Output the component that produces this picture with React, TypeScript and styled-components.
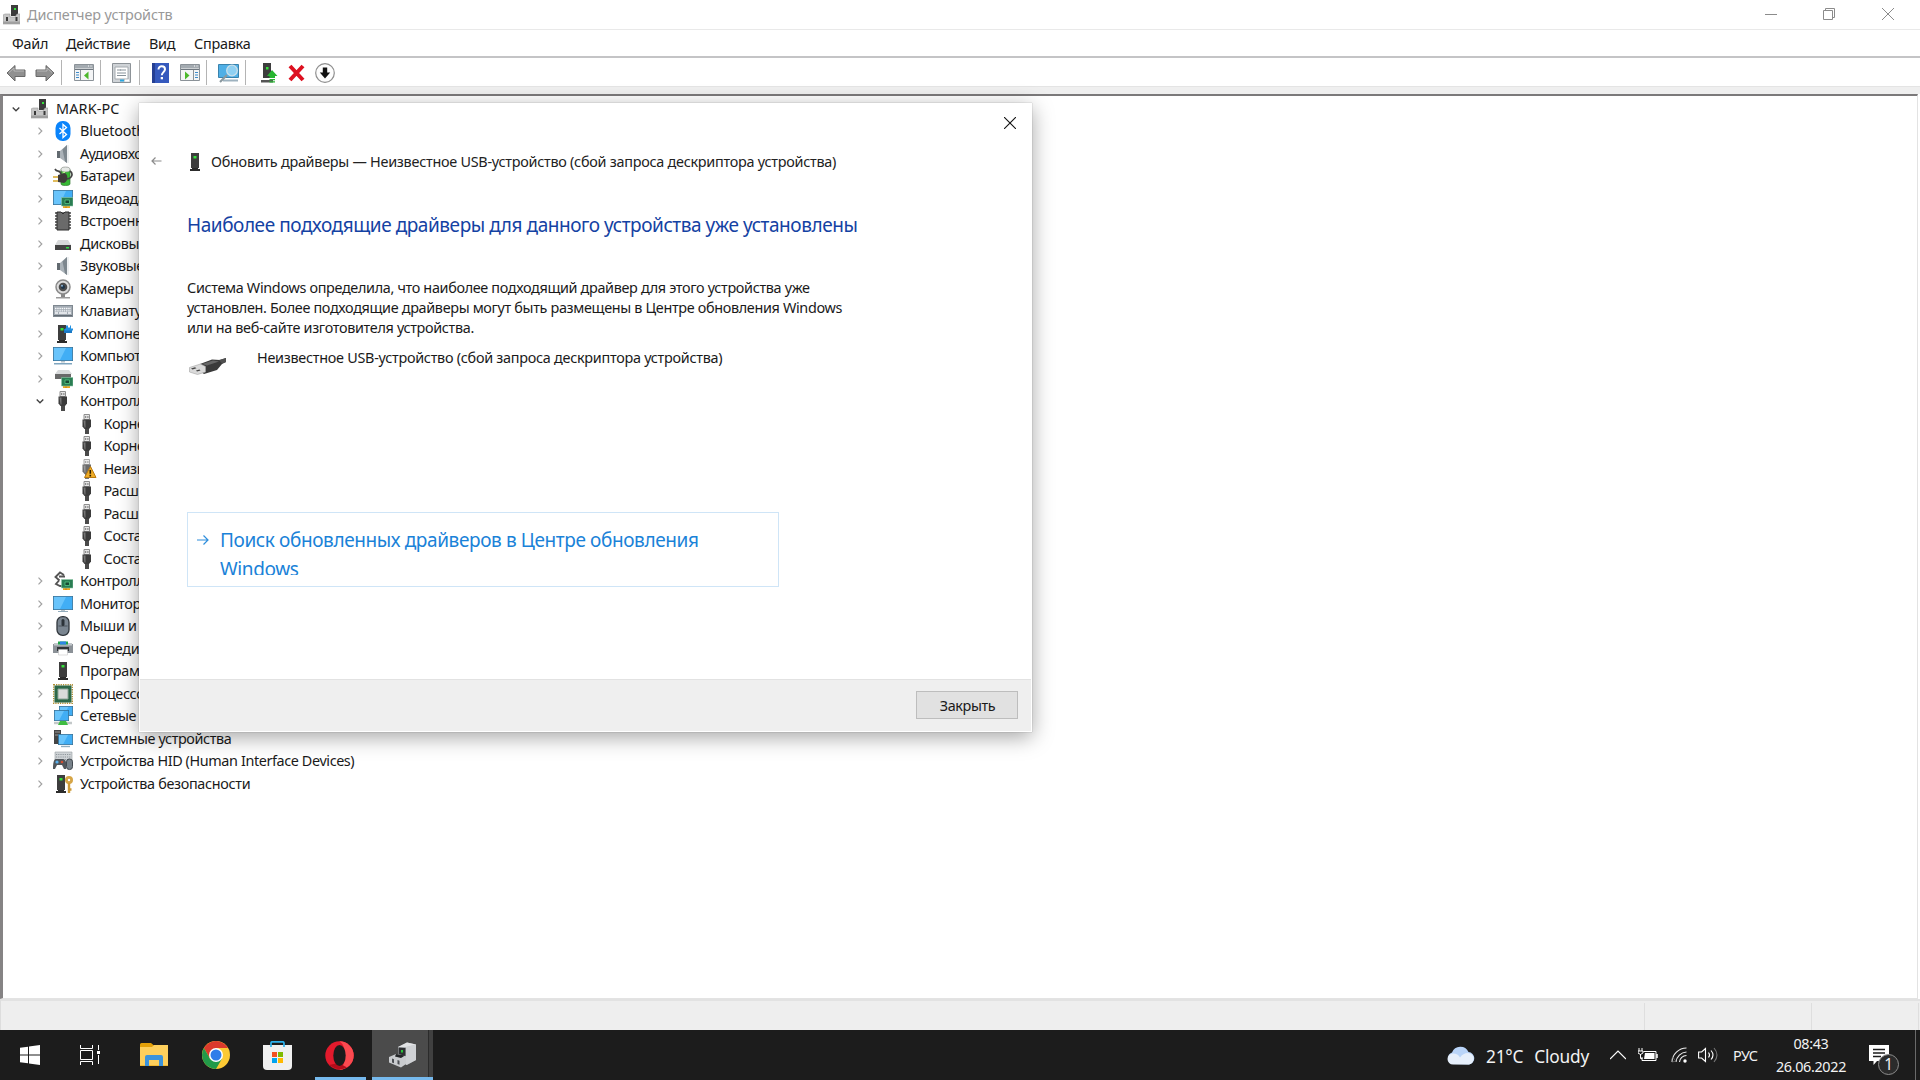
import React from "react";
import styled, { createGlobalStyle } from "styled-components";

const Global = createGlobalStyle`
  * { box-sizing: border-box; }
  body { margin: 0; background: #fff; overflow: hidden; }
  svg { display: block; flex: none; }
`;

const Desktop = styled.div`
  position: relative;
  width: 1920px;
  height: 1080px;
  display: flex;
  flex-direction: column;
  background: #fff;
  color: #1a1a1a;
  font-family: "Noto Sans", "Open Sans", sans-serif;
  font-size: 14.4px;
  letter-spacing: -0.2px;
  white-space: nowrap;
  overflow: hidden;
`;

/* ---------- window chrome ---------- */
const TitleBar = styled.header`
  height: 30px;
  flex: none;
  display: flex;
  align-items: center;
  padding: 0 3px 0 3px;
  border-bottom: 1px solid #e9e9e9;
  color: #999;
`;
const WindowTitle = styled.span`
  margin-left: 7px;
  flex: 1;
  line-height: 20px;
  letter-spacing: -0.1px;
`;
const Caption = styled.button`
  width: 58.5px;
  height: 29px;
  padding: 0 0 2px;
  border: 0;
  background: none;
  display: flex;
  align-items: center;
  justify-content: center;
`;
const MenuBar = styled.nav`
  height: 28px;
  flex: none;
  display: flex;
  gap: 20px;
  padding: 4px 0 0 12px;
  line-height: 20px;
  letter-spacing: -0.25px;
  border-bottom: 2px solid #c4c4c6;
`;
const MenuItem = styled.span<{ $w: number }>`
  width: ${(p) => p.$w}px;
`;
const ToolBar = styled.div`
  height: 28px;
  flex: none;
  display: flex;
  align-items: center;
  padding: 1px 0 0 6px;
`;
const Tool = styled.span<{ $gap: number }>`
  margin-left: ${(p) => p.$gap}px;
`;
const Divider = styled.span<{ $gap: number }>`
  width: 1px;
  height: 25px;
  margin: 0 0 0 ${(p) => p.$gap}px;
  background: #b4b4b4;
`;
const Rebar = styled.div`
  height: 8px;
  flex: none;
  background: #efefef;
  border-top: 1px solid #e4e4e4;
`;

/* ---------- tree ---------- */
const TreePane = styled.main`
  height: 905px;
  flex: none;
  margin-right: 2px;
  border: 1px solid #e3e3e3;
  border-top: 2px solid #7b797a;
  border-left: 3px solid #858384;
  padding-top: 1.25px;
  letter-spacing: -0.3px;
`;
const Row = styled.div<{ $pad: number }>`
  height: 22.5px;
  display: flex;
  align-items: center;
  padding-left: ${(p) => p.$pad}px;
`;
const Twist = styled.span`
  width: 12px;
  display: flex;
  justify-content: center;
`;
const RowIcon = styled.span<{ $ml: number }>`
  margin-left: ${(p) => p.$ml}px;
  width: 20px;
`;
const Label = styled.span<{ $ml: number; $track?: number }>`
  margin-left: ${(p) => p.$ml}px;
  line-height: 20px;
  letter-spacing: ${(p) => p.$track ?? -0.32}px;
`;
const StatusBar = styled.footer`
  height: 31px;
  flex: none;
  display: flex;
  justify-content: flex-end;
  background: #eee;
  border-top: 2px solid #e2e2e2;
  border-left: 1px solid #ddd;
  padding-top: 2px;
`;
const StatusCell = styled.span<{ $w: number }>`
  width: ${(p) => p.$w}px;
  border-left: 1px solid #dedede;
`;

/* ---------- dialog ---------- */
const Dialog = styled.section`
  position: absolute;
  left: 139px;
  top: 103px;
  width: 893px;
  height: 629px;
  display: flex;
  flex-direction: column;
  background: #fff;
  border: 1px solid #fff;
  box-shadow: 0 0 1px rgba(0, 0, 0, 0.35), 0 5px 20px rgba(0, 0, 0, 0.36);
`;
const DialogTop = styled.div`
  height: 38px;
  display: flex;
  justify-content: flex-end;
  align-items: center;
  padding-right: 15px;
`;
const DialogHead = styled.div`
  height: 40px;
  display: flex;
  align-items: center;
  padding-left: 11px;
`;
const DialogName = styled.span`
  margin-left: 6px;
  line-height: 20px;
  letter-spacing: -0.26px;
  color: #222;
`;
const DialogBody = styled.div`
  flex: 1;
  padding-left: 47px;
  display: flex;
  flex-direction: column;
  align-items: flex-start;
`;
const Heading = styled.h1`
  margin: 27px 0 0;
  font-size: 19px;
  font-weight: 400;
  line-height: 32px;
  letter-spacing: -0.44px;
  color: #1442a3;
`;
const Paragraph = styled.p`
  margin: 37px 0 0;
  line-height: 20px;
  letter-spacing: -0.33px;
`;
const DeviceLine = styled.div`
  margin-top: 10px;
  height: 40px;
  display: flex;
  align-items: flex-start;
  gap: 31px;
  line-height: 20px;
  letter-spacing: -0.27px;
`;
const DeviceArt = styled.span`
  padding: 9px 0 0 1px;
`;
const CommandLink = styled.a`
  margin-top: 124px;
  width: 592px;
  height: 75px;
  border: 1px solid #cfe5f7;
  display: flex;
  padding: 13px 0 0 9px;
  color: #1a82d8;
  font-size: 19px;
  line-height: 28.5px;
  letter-spacing: -0.39px;
`;
const CommandText = styled.span`
  margin-left: 11px;
  width: 520px;
  height: 49px;
  overflow: hidden;
  white-space: normal;
`;
const ArrowBox = styled.span`
  padding-top: 9px;
`;
const DialogFooter = styled.div`
  height: 52px;
  display: flex;
  justify-content: flex-end;
  padding: 11px 13px 0 0;
  background: #efefef;
  border-top: 1px solid #e2e2e2;
`;
const CloseButton = styled.button`
  width: 102px;
  height: 28px;
  padding: 0 0 0 1px;
  border: 1px solid #bdbdbd;
  background: #e1e1e1;
  font: inherit;
  letter-spacing: -0.4px;
  color: #1a1a1a;
`;

/* ---------- taskbar ---------- */
const TaskBar = styled.div`
  height: 50px;
  flex: none;
  display: flex;
  background: #1c1c1c;
  color: #f2f2f2;
`;
const Task = styled.div<{ $w: number; $active?: boolean; $open?: boolean }>`
  width: ${(p) => p.$w}px;
  display: flex;
  align-items: center;
  justify-content: center;
  background: ${(p) => (p.$active ? "linear-gradient(90deg,#4b4b4b 56px,#2b2b2b 56px,#2b2b2b 57px,#404040 57px)" : "none")};
  ${(p) => p.$active && "padding-right: 1px;"}
  ${(p) => p.$open && "box-shadow: inset 0 -3px #76b9ed;"}
`;
const OpenTask = styled(Task)`
  margin: 0 6px 0 6px;
  padding-right: 2px;
`;
const Spacer = styled.div<{ $w?: number }>`
  flex: ${(p) => (p.$w ? `0 0 ${p.$w}px` : "1")};
`;
const Tray = styled.div`
  display: flex;
  align-items: center;
  width: 473px;
  flex: none;
`;
const Weather = styled.span`
  width: 124px;
  padding-top: 3px;
  margin-left: 11px;
  font-size: 17.3px;
  letter-spacing: -0.2px;
  line-height: 24px;
  display: flex;
  gap: 11px;
`;
const TrayItem = styled.span<{ $ml: number }>`
  margin-left: ${(p) => p.$ml}px;
`;
const Lang = styled.span`
  margin-left: 15px;
  width: 28px;
  padding-top: 1px;
  letter-spacing: -0.5px;
`;
const Clock = styled.div`
  width: 74px;
  margin-left: 13px;
  padding-bottom: 1px;
  text-align: center;
  line-height: 23px;
  letter-spacing: -0.35px;
`;
const Notify = styled.div`
  position: relative;
  margin-left: 21px;
  width: 46px;
  height: 50px;
  display: flex;
  align-items: center;
`;
const Badge = styled.span`
  position: absolute;
  left: 9px;
  top: 24px;
  width: 21px;
  height: 21px;
  border-radius: 50%;
  border: 1px solid #8d8d8d;
  background: #2b2b2b;
  text-align: center;
  line-height: 19px;
  font-size: 15.5px;
`;
const PeekLine = styled.span`
  width: 1px;
  height: 50px;
  background: #6a6a6a;
`;

/* ---------- drawings ---------- */
type Kids = { children: React.ReactNode; w?: number; h?: number };
const Ico = ({ children, w = 20, h = 20 }: Kids) => (
  <svg width={w} height={h} viewBox={`0 0 ${w} ${h}`} fill="none">{children}</svg>
);

const Card = () => (
  <g>
    <path d="M10 16h7v3h-7z" fill="#eda51c" />
    <path d="M13 16v3" stroke="#a86e0c" strokeWidth=".7" />
    <path d="M8.500 8.500H20V17H8.500z" fill="#2a7d53" stroke="#8fc9a8" strokeWidth=".6" />
    <path d="M12 11h4.500v3.500H12z" fill="#174a33" stroke="#5fd68e" strokeWidth=".7" />
  </g>
);
const Tower = ({ x = 5 }: { x?: number }) => (
  <g>
    <path d={`M${x + 1} 1h8v15h-8z`} fill="#3d3d3d" />
    <path d={`M${x + 2} 16h6v1h-6zM${x} 17h10v2h-10z`} fill="#2c2c2c" />
    <path d={`M${x + 3.5} 4h3v2.5h-3z`} fill="#35e33b" />
  </g>
);
const Screen = ({ x = 0, y = 1, w = 20, h = 14 }) => (
  <g>
    <rect x={x + 0.4} y={y + 0.4} width={w - 0.8} height={h - 0.8} fill="#41aef5" stroke="#35749c" strokeWidth=".8" />
    <path d={`M${x + 1} ${y + 1}h${w * 0.6}L${x + w * 0.35} ${y + h - 1}H${x + 1}z`} fill="#69c4fb" />
  </g>
);
const Speaker = () => (
  <>
    <path d="M4 7h4v7H4z" fill="#626a70" />
    <path d="M7 7l7-6v18l-7-5z" fill="#aab2b8" />
    <path d="M9.500 5.500L14 1v18l-2-1.500z" fill="#7d878e" />
    <path d="M15 1v18" stroke="#dce1e4" />
  </>
);
const Usb = () => (
  <>
    <path d="M7 .5h5.500v5H7z" fill="#e6e6e6" stroke="#8e8e8e" />
    <path d="M8.200 2h1v2h-1zM10.400 2h1v2h-1z" fill="#777" />
    <path d="M5.500 5.500H14v7L12 15H7.500l-2-2.500z" fill="#3c3c3c" />
    <path d="M6.500 6.500h2v7h-1z" fill="#777" />
    <path d="M8 15h4v5H8z" fill="#4a4a4a" />
  </>
);

const icons: Record<string, React.ReactNode> = {
  root: (
    <>
      <path d="M8 0h7v11H8z" fill="#3c3c3c" /><path d="M11 3h2v2h-2z" fill="#35e33b" />
      <path d="M0 10l2-1h5v3h5l2-3h3v10H0z" fill="#c6c6c6" stroke="#999" strokeWidth=".6" />
      <path d="M0 16.500h17V19H0z" fill="#a0a0a0" />
      <path d="M3 12h2v4H3zM12.500 12h2v4h-2z" fill="#3a3a3a" />
    </>
  ),
  bt: (
    <>
      <rect x="2.500" width="15" height="20" rx="7" fill="#0a84fb" />
      <path d="M6.500 7l7 6.500L10 16.500v-13l3.500 3L6.500 13" stroke="#fff" strokeWidth="1.300" />
    </>
  ),
  audio: <Speaker />,
  battery: (
    <>
      <path d="M8 4c0-3 9-3 9 0v14c0 2-9 2-9 0z" fill="#37b834" stroke="#347b32" strokeWidth=".7" />
      <ellipse cx="12.500" cy="3.500" rx="4.500" ry="2.500" fill="#e5e8e5" stroke="#888" strokeWidth=".6" />
      <path d="M9 7l3-2v4z" fill="#b8f58e" />
      <path d="M2 3c2 4 5 0 6 5M14 13c6-1 6-6 3-8" stroke="#444" strokeWidth="1.700" />
      <path d="M5 9l6-2c4 0 5 8 0 10l-6-1z" fill="#403c3a" />
      <path d="M0 11h5M0 15h5" stroke="#d7a728" strokeWidth="1.500" />
    </>
  ),
  display: (
    <>
      <Screen h={15} /><Card />
    </>
  ),
  chip: (
    <>
      <path d="M2 2h16M2 5h16M2 8h16M2 11h16M2 14h16M2 17h16" stroke="#454545" strokeWidth="1.500" />
      <path d="M4 1h4l2 2 2-2h4v18H4z" fill="#6a6a6a" stroke="#2d2d2d" />
    </>
  ),
  disk: (
    <>
      <path d="M5 6h10l3 5H2z" fill="#d8dadb" /><path d="M2 11h16v5H2z" fill="#444" />
      <path d="M13 13h3v1.500h-3z" fill="#2fe044" />
    </>
  ),
  camera: (
    <>
      <path d="M8 15h4v3H8z" fill="#888" /><path d="M3 18h14v1.500H3z" fill="#9a9a9a" />
      <circle cx="10" cy="8" r="7" fill="#dcdcdc" stroke="#8a8a8a" strokeWidth="1.500" />
      <circle cx="10" cy="8" r="4.300" fill="#4c4c4c" /><circle cx="10" cy="8" r="2" fill="#1e3448" />
      <circle cx="9" cy="6.800" r="1" fill="#8db4d6" />
    </>
  ),
  keyboard: (
    <>
      <rect x=".5" y="4.500" width="19" height="11" fill="#a4acb4" stroke="#7f8890" />
      <path d="M2 7.500h16M2 9.800h16" stroke="#f6f8fa" strokeWidth="1.300" strokeDasharray="1.500 .7" />
      <path d="M2 12h3M6 12h8M15 12h3" stroke="#f6f8fa" strokeWidth="1.300" /><path d="M1 14.500h18" stroke="#636c74" />
    </>
  ),
  component: (
    <>
      <Tower x={4} />
      <path d="M11 5h8v4h-8z" fill="#1a78c4" /><path d="M13 1.500h2v2h2v-2h1v3h2v2h-8v-2h1z" fill="#2492e2" />
    </>
  ),
  computer: (
    <>
      <Screen /><path d="M8 15h4v1.500H8z" fill="#b8c5cd" /><path d="M1 17h18v1.500H1z" fill="#7fa5bf" />
    </>
  ),
  storage: (
    <>
      <path d="M5 1h11l3 4H2z" fill="#d8dadb" /><path d="M2 5h16v5H2z" fill="#696969" /><Card />
    </>
  ),
  usb: <Usb />,
  warn: (
    <>
      <g opacity=".75"><Usb /></g>
      <path d="M13.500 7.500L19 18.500H7.500z" fill="#f0ad26" stroke="#b97a10" strokeLinejoin="round" />
      <path d="M13.300 11v3.700M13.300 15.800v1.600" stroke="#2c1c00" strokeWidth="1.600" />
    </>
  ),
  scsi: (
    <>
      <path d="M11 4L7 1.500 2.500 6l4 3.500M6 5.500h6M6 9.500L3 13l4 2h3" stroke="#555" strokeWidth="1.900" />
      <Card />
    </>
  ),
  monitor: (
    <>
      <Screen y={2} /><path d="M8 16h4v1H8z" fill="#b8c5cd" /><path d="M5 17h10v1H5z" fill="#92acbc" />
    </>
  ),
  mouse: (
    <>
      <rect x="4" y=".7" width="12" height="18.600" rx="5.500" fill="#7a8590" stroke="#30363c" strokeWidth="1.300" />
      <path d="M5.500 10h9" stroke="#4a535b" /><rect x="8.500" y="3" width="3" height="7" rx="1.500" fill="#2b3238" />
    </>
  ),
  printer: (
    <>
      <path d="M0 5h20v9H0z" fill="#8b9197" /><path d="M1 4h18v2.500H1z" fill="#c3c8cc" />
      <path d="M5 2.500h10v3H5z" fill="#1fa54d" /><path d="M7 2.500h6v3H7z" fill="#2d86e6" />
      <path d="M4 8h12v4H4z" fill="#303438" /><path d="M5.500 10.500h9V16h-9z" fill="#fff" stroke="#bbb" strokeWidth=".5" />
    </>
  ),
  tower: <Tower />,
  cpu: (
    <>
      <path d="M.7 .7h18.600v18.600H.7z" stroke="#b08f35" strokeDasharray="1.300 1" strokeWidth="1.400" />
      <path d="M1.500 1.500h17v17h-17z" fill="#2c6848" /><path d="M5 5h10v10H5z" fill="#dadbda" stroke="#8fa598" />
    </>
  ),
  net: (
    <>
      <Screen x={6} y={0} w={14} h={10} /><Screen x={1} y={4} w={15} h={11} />
      <path d="M1 17h18" stroke="#c3c8c9" strokeWidth="2.500" /><path d="M7 15h6l2 4H5z" fill="#3fbd42" />
    </>
  ),
  system: (
    <>
      <path d="M1 1h7v14H1z" fill="#444" /><path d="M2 3h5M2 6h5" stroke="#999" />
      <Screen x={5} y={5} w={15} h={11} /><path d="M8 17.500h9" stroke="#90aec0" strokeWidth="1.400" />
    </>
  ),
  hid: (
    <>
      <path d="M2 1h17v10H2z" fill="#cfd3d6" stroke="#979da2" strokeWidth=".6" />
      <path d="M3 3.500h15M3 6h15M3 8.500h15" stroke="#8f969b" strokeDasharray="1.200 1" />
      <path d="M0 18c0-7 1-10 3-10h7c3 0 4 5 3 10h-2l-2-4H4l-2 4z" fill="#51565b" />
      <circle cx="4" cy="11" r="1.600" fill="#5ab1ee" /><circle cx="9" cy="11" r="1.300" fill="#d24f31" />
      <rect x="13.500" y="8" width="6" height="10.500" rx="2.800" fill="#78828a" stroke="#41484e" />
    </>
  ),
  security: (
    <>
      <Tower x={3} />
      <circle cx="16" cy="6" r="2.600" stroke="#d6a546" strokeWidth="2.800" fill="#fff" />
      <path d="M16 9v10M16 15.500h2.500" stroke="#cd9a38" strokeWidth="2.400" />
    </>
  ),
};

const tree: [string, string][] = [
  ["bt", "Bluetooth"], ["audio", "Аудиовходы"], ["battery", "Батареи"], ["display", "Видеоадаптеры"],
  ["chip", "Встроенное ПО"], ["disk", "Дисковые устройства"], ["audio", "Звуковые устройства"], ["camera", "Камеры"],
  ["keyboard", "Клавиатуры"], ["component", "Компоненты"], ["computer", "Компьютер"], ["storage", "Контроллеры"],
  ["usb", "Контроллеры"],
];
const usbKids = ["Корневой", "Корневой", "Неизвестное", "Расширяемый", "Расширяемый", "Составное", "Составное"];
const tree2: [string, string][] = [
  ["scsi", "Контроллеры"], ["monitor", "Мониторы"], ["mouse", "Мыши и иные"], ["printer", "Очереди печати"],
  ["tower", "Программные"], ["cpu", "Процессоры"], ["net", "Сетевые"], ["system", "Системные устройства"],
  ["hid", "Устройства HID (Human Interface Devices)"], ["security", "Устройства безопасности"],
];
const tracking: Record<string, number> = { hid: -0.39, bt: -0.2, system: -0.38 };

const Chevron = ({ open }: { open?: boolean }) => (
  <svg width="10" height="10" viewBox="0 0 10 10" fill="none">
    {open ? <path d="M1.700 3.500L5 6.800l3.300-3.300" stroke="#404040" strokeWidth="1.300" /> : <path d="M3.500 1.700L6.800 5 3.500 8.300" stroke="#a2a2a2" strokeWidth="1.200" />}
  </svg>
);

const Category = ({ icon, text, open }: { icon: string; text: string; open?: boolean }) => (
  <Row $pad={31}>
    <Twist><Chevron open={open} /></Twist>
    <RowIcon $ml={7}><Ico>{icons[icon]}</Ico></RowIcon>
    <Label $ml={7} $track={tracking[icon]}>{text}</Label>
  </Row>
);

const ArrowIcon = ({ flip }: { flip?: boolean }) => (
  <svg width="20" height="18" viewBox="0 0 20 18">
    <g transform={flip ? "matrix(-1 0 0 1 20 0)" : undefined}>
      <path d="M1 9l8-7.500V6h10v6.500H9V17z" fill="#909090" stroke="#686868" />
      <path d="M3 8.500L8 4v3h10" fill="none" stroke="#b8b8b8" />
    </g>
  </svg>
);
const PanelIcon = ({ right }: { right?: boolean }) => (
  <svg width="20" height="17" viewBox="0 0 20 17">
    <path d="M.5.500h19v16H.5z" fill="#f4f5f6" stroke="#8b9298" />
    <path d="M1 1h18v3.500H1z" fill="#a4abb1" /><path d="M1 5.500h18" stroke="#707880" />
    <path d="M14 2h1M16.500 2h1" stroke="#fff" />
    <path d={right ? "M13.500 6v10" : "M6.500 6v10"} stroke="#8b9298" />
    <path d={right ? "M15 8.500h3M15 11h3M15 13.500h3" : "M2 8.500h3M2 11h3M2 13.500h3"} stroke="#3e8bc9" />
    <path d={right ? "M5 7.500l4.500 4-4.500 4z" : "M14.500 7.500l-4.500 4 4.500 4z"} fill="#4cb82c" />
  </svg>
);

export default function App() {
  return (
    <Desktop>
      <Global />
      <TitleBar>
        <Ico w={17} h={20}>{icons.root}</Ico>
        <WindowTitle>Диспетчер устройств</WindowTitle>
        <Caption><svg width="12" height="12"><path d="M0 6.500h12" stroke="#8b8b8b" /></svg></Caption>
        <Caption><svg width="12" height="12" fill="none" stroke="#8b8b8b"><path d="M.5 2.500h9v9h-9zM2.500 2.500v-2h9v9h-2" /></svg></Caption>
        <Caption><svg width="12" height="12" stroke="#8b8b8b"><path d="M0 0l12 12M12 0L0 12" /></svg></Caption>
      </TitleBar>
      <MenuBar>
        <MenuItem $w={34}>Файл</MenuItem>
        <MenuItem $w={63}>Действие</MenuItem>
        <MenuItem $w={25}>Вид</MenuItem>
        <MenuItem $w={57}>Справка</MenuItem>
      </MenuBar>
      <ToolBar>
        <Tool $gap={0}><ArrowIcon /></Tool>
        <Tool $gap={9}><ArrowIcon flip /></Tool>
        <Divider $gap={6} />
        <Tool $gap={12}><PanelIcon /></Tool>
        <Divider $gap={6} />
        <Tool $gap={11}>
          <svg width="19" height="20" viewBox="0 0 19 20">
            <path d="M.5.500h18v19H.5z" fill="#cfd3d7" stroke="#8d9398" />
            <path d="M3 4h13v12H3z" fill="#fff" stroke="#a4aaaf" /><path d="M5 7h4M5 10h9M5 12.500h9M8 7h6" stroke="#87929a" />
            <path d="M8 17.500h4" stroke="#2aa7e0" strokeWidth="2" /><path d="M13 17.500h4" stroke="#fff" strokeWidth="2" />
          </svg>
        </Tool>
        <Divider $gap={8} />
        <Tool $gap={12}>
          <svg width="17" height="20" viewBox="0 0 17 20">
            <path d="M0 0h17v20H0z" fill="#3559bd" /><path d="M0 0h3v20H0z" fill="#253f93" />
            <path d="M6.500 6.500C6.500 2 13 2.500 13 6.300c0 2.700-3.200 3-3.200 6" stroke="#fff" strokeWidth="2" fill="none" /><path d="M8.700 14h2.300v2.300H8.700z" fill="#fff" />
          </svg>
        </Tool>
        <Tool $gap={11}><PanelIcon right /></Tool>
        <Divider $gap={6} />
        <Tool $gap={11}>
          <svg width="21" height="20" viewBox="0 0 21 20">
            <path d="M.5 1.500h20v13H.5z" fill="#4fafe6" stroke="#3a83ad" /><path d="M5 17.500h15" stroke="#9eb2bf" strokeWidth="2" />
            <path d="M9 12l-7 7" stroke="#8a989f" strokeWidth="2.200" /><circle cx="14" cy="7.500" r="5.300" fill="#8fd0f2" stroke="#c9dfea" strokeWidth="1.300" />
          </svg>
        </Tool>
        <Divider $gap={6} />
        <Tool $gap={14}>
          <svg width="18" height="20" viewBox="0 0 18 20">
            <path d="M3 0h8v15H3z" fill="#3d3d3d" /><path d="M1 17h12v2.500H1z" fill="#555" /><path d="M6 4h2.500v2.500H6z" fill="#35e33b" />
            <path d="M12 7l5.500 6H15v2H9.500v-2H7zM9.500 16h5.500v1.300H9.500zM9.500 18.300h5.500v1.300H9.500z" fill="#27b530" />
          </svg>
        </Tool>
        <Tool $gap={10}>
          <svg width="17" height="18" viewBox="0 0 17 18"><path d="M2 2l13 14M15 2L2 16" stroke="#dd1020" strokeWidth="4" /></svg>
        </Tool>
        <Tool $gap={10}>
          <svg width="20" height="20" viewBox="0 0 20 20"><circle cx="10" cy="10" r="9.300" fill="#fdfdfd" stroke="#8e8e8e" strokeWidth="1.200" /><path d="M7.800 4.500h4.400v5h3L10 15.500 4.800 9.500h3z" fill="#111" /></svg>
        </Tool>
      </ToolBar>
      <Rebar />
      <TreePane>
        <Row $pad={7}>
          <Twist><Chevron open /></Twist>
          <RowIcon $ml={9}><Ico w={17} h={20}>{icons.root}</Ico></RowIcon>
          <Label $ml={5} $track={0.15}>MARK-PC</Label>
        </Row>
        {tree.map(([icon, text], i) => <Category key={i} icon={icon} text={text} open={icon === "usb"} />)}
        {usbKids.map((text, i) => (
          <Row key={i} $pad={74}>
            <RowIcon $ml={0}><Ico>{i === 2 ? icons.warn : icons.usb}</Ico></RowIcon>
            <Label $ml={6.500}>{text}</Label>
          </Row>
        ))}
        {tree2.map(([icon, text], i) => <Category key={i} icon={icon} text={text} />)}
      </TreePane>
      <StatusBar>
        <StatusCell $w={167} />
        <StatusCell $w={107} />
        <StatusCell $w={2} />
      </StatusBar>

      <TaskBar>
        <Task $w={60}><svg width="20" height="20" viewBox="0 0 20 20" fill="#fff"><path d="M0 2.800L8 1.700V9.500H0zM9 1.500L20 0v9.500H9zM0 10.500h8v7.800L0 17.200zM9 10.500h11V20L9 18.500z" /></svg></Task>
        <Task $w={60}>
          <svg width="20" height="20" viewBox="0 0 20 20" fill="none" stroke="#fff"><path d="M.5 0v3.500h12V0M.5 5.500h12v9H.5zM.5 20v-3.500h12V20M18.500 0v5M18.500 10v9" /><path d="M17 6h3v3h-3z" fill="#fff" stroke="none" /></svg>
        </Task>
        <Spacer $w={3} />
        <Task $w={62}>
          <svg width="28" height="24" viewBox="0 0 28 24"><path d="M0 1.500Q0 0 1.500 0H11l3 2.500h14V23H0z" fill="#e3a008" /><path d="M0 4h12l2-2h14v20.500H0z" fill="#fdcf5c" /><path d="M5 14q0-2 2-2h14q2 0 2 2v9h-4v-6H9v6H5z" fill="#3b93db" /></svg>
        </Task>
        <Task $w={62}>
          <svg width="28" height="28" viewBox="0 0 28 28">
            <circle cx="14" cy="14" r="14" fill="#fcc934" />
            <path d="M14 7h12.120A14 14 0 0 0 1.880 7L8 17.500z" fill="#db3a2c" />
            <path d="M1.880 7A14 14 0 0 0 14 28l6.060-10.500L14 14 8 17.500z" fill="#229a49" />
            <circle cx="14" cy="14" r="7" fill="#fff" /><circle cx="14" cy="14" r="5.500" fill="#2f7de9" />
          </svg>
        </Task>
        <Task $w={61}>
          <svg width="29" height="29" viewBox="0 0 29 29">
            <path d="M0 4h29v21q0 4-4 4H4q-4 0-4-4z" fill="#f0f0f0" /><path d="M8 6V2q0-1.200 1.200-1.200h10.600Q21 .8 21 2v4" fill="none" stroke="#2cb2ee" strokeWidth="1.700" />
            <path d="M9 11h5v5H9z" fill="#f25022" /><path d="M15 11h5v5h-5z" fill="#7fba00" /><path d="M9 17h5v5H9z" fill="#00a4ef" /><path d="M15 17h5v5h-5z" fill="#ffb900" />
          </svg>
        </Task>
        <Spacer $w={1} />
        <OpenTask $w={51} $open>
          <svg width="29" height="29" viewBox="0 0 29 29">
            <circle cx="14.500" cy="14.500" r="14.200" fill="#e21a2c" />
            <path d="M14.500.300A14.200 14.200 0 0 1 14.500 28.700Q20 25 20 14.500T14.500.300z" fill="#fb4a50" />
            <path d="M4 24Q14 31 22 26.500L14 22z" fill="#b30d1b" />
            <ellipse cx="14.500" cy="14.500" rx="6.200" ry="10.500" fill="#1c1c1c" />
          </svg>
        </OpenTask>
        <Task $w={61} $open $active>
          <svg width="27" height="27" viewBox="0 0 27 27">
            <path d="M9 5l9-4.500 9 2V18l-9 5-9-4z" fill="#b4b7bb" /><path d="M17 5l10-2.500V18l-10 5z" fill="#cfd1d4" /><path d="M9 5l9-4.500 9 2L17 5z" fill="#e2e3e5" /><path d="M9.500 5.500l7 .5v8l-7-2z" fill="#2f3133" />
            <path d="M12 8h2v2.500h-2z" fill="#28c53a" /><path d="M0 15l7-3 10 2.500V22l-5 3.500L0 20.500z" fill="#c9cbce" /><path d="M7 12l9 1.500-4 2.500-6-1.500z" fill="#242628" />
            <path d="M3 16.500l2 .7v4l-2-.7zM8.500 18l2 .7v4l-2-.7z" fill="#4a4d52" />
          </svg>
        </Task>
        <Spacer />
        <Tray>
          <svg width="28" height="19" viewBox="0 0 28 19">
            <path d="M6 18a6 6 0 0 1-1-11.500A9 9 0 0 1 21.500 6 6.300 6.300 0 0 1 22 18.500z" fill="#b9d4f8" />
            <path d="M6 18.500a5.500 5.500 0 0 1 0-11q5 0 7 4 3-4.500 8-4.500a5.800 5.800 0 0 1 1 11.500z" fill="#e6effb" />
          </svg>
          <Weather><span>21°C</span><span>Cloudy</span></Weather>
          <TrayItem $ml={0}><svg width="16" height="10" fill="none" stroke="#fff" strokeWidth="1.200"><path d="M0 9l8-8 8 8" /></svg></TrayItem>
          <TrayItem $ml={12}>
            <svg width="20" height="14" viewBox="0 0 20 14"><path d="M5.500 3.500h12.500v9H4V9" fill="none" stroke="#fff" /><path d="M7 5h9.500v6H6z" fill="#fff" /><path d="M19 6v4" stroke="#fff" strokeWidth="1.500" /><path d="M1 0v3M4 0v3M0 3h5v2q-2.500 3-5 0zM2.500 6v4.500h2" stroke="#fff" fill="none" /></svg>
          </TrayItem>
          <TrayItem $ml={13}>
            <svg width="16" height="16" viewBox="0 0 16 16" fill="none" stroke="#eee" strokeWidth="1.100"><path d="M1 15A14.500 14.500 0 0 1 15.500 1M5 15A11 11 0 0 1 15.500 5M8.500 15A7 7 0 0 1 15.500 8.500" /><path d="M1 15A14.500 14.500 0 0 1 1.500 10L5 14z" stroke="#777" strokeWidth=".7" /><circle cx="14" cy="14" r="1.700" fill="#fff" stroke="none" /></svg>
          </TrayItem>
          <TrayItem $ml={11}>
            <svg width="20" height="18" viewBox="0 0 20 18" fill="none" stroke="#fff" strokeWidth="1.100"><path d="M.6 6h3L7.500 2.500v13L3.600 12h-3zM10.500 6.500q2 2.500 0 5M13 4.500q4 4.500 0 9" /><path d="M16 2q6 7 0 14" stroke="#777" /></svg>
          </TrayItem>
          <Lang>РУС</Lang>
          <Clock><div>08:43</div><div>26.06.2022</div></Clock>
          <Notify>
            <svg width="20" height="20" viewBox="0 0 20 20"><path d="M0 0h20v16H8l-3.500 4v-4H0z" fill="#fff" /><path d="M4 4.500h12M4 8h12M4 11.500h8" stroke="#1c1c1c" strokeWidth="1.300" /></svg>
            <Badge>1</Badge>
          </Notify>
          <PeekLine />
        </Tray>
      </TaskBar>

      <Dialog>
        <DialogTop><svg width="12" height="12" stroke="#111" strokeWidth="1.100"><path d="M0 0l12 12M12 0L0 12" /></svg></DialogTop>
        <DialogHead>
          <svg width="11" height="10" viewBox="0 0 11 10" fill="none" stroke="#8c8c8c" strokeWidth="1.200"><path d="M10.500 4H1M4.500.5L1 4l3.500 3.500" /></svg>
          <Tool $gap={23}><Ico>{icons.tower}</Ico></Tool>
          <DialogName>Обновить драйверы — Неизвестное USB-устройство (сбой запроса дескриптора устройства)</DialogName>
        </DialogHead>
        <DialogBody>
          <Heading>Наиболее подходящие драйверы для данного устройства уже установлены</Heading>
          <Paragraph>
            Система Windows определила, что наиболее подходящий драйвер для этого устройства уже<br />
            установлен. Более подходящие драйверы могут быть размещены в Центре обновления Windows<br />
            или на веб-сайте изготовителя устройства.
          </Paragraph>
          <DeviceLine>
            <DeviceArt>
              <svg width="38" height="20" viewBox="0 0 38 20">
                <path d="M12 7L24 2.500l8 .5 6-2v4l-4 2-5 6-13 4-4-3z" fill="#3a3a3a" />
                <path d="M14 7l11-3.500 6 1L19 8.500z" fill="#666" /><path d="M31 3l7-2v4l-4 1.500z" fill="#505050" />
                <path d="M1.500 10.500l11-3.500 5 2.500V15l-8 2.500-8-2.500z" fill="#dadada" stroke="#a5a5a5" strokeWidth=".6" />
                <path d="M3 11.500l4-1.200 1.500 1-4 1.200zM8 13.500l3.500-1 1 1-3.500 1z" fill="#444" />
              </svg>
            </DeviceArt>
            <span>Неизвестное USB-устройство (сбой запроса дескриптора устройства)</span>
          </DeviceLine>
          <CommandLink>
            <ArrowBox><svg width="12" height="11" fill="none" stroke="#2e8edc" strokeWidth="1.200"><path d="M0 5h11M6.500.5L11 5 6.500 9.500" /></svg></ArrowBox>
            <CommandText>Поиск обновленных драйверов в Центре обновления Windows</CommandText>
          </CommandLink>
        </DialogBody>
        <DialogFooter><CloseButton>Закрыть</CloseButton></DialogFooter>
      </Dialog>
    </Desktop>
  );
}
